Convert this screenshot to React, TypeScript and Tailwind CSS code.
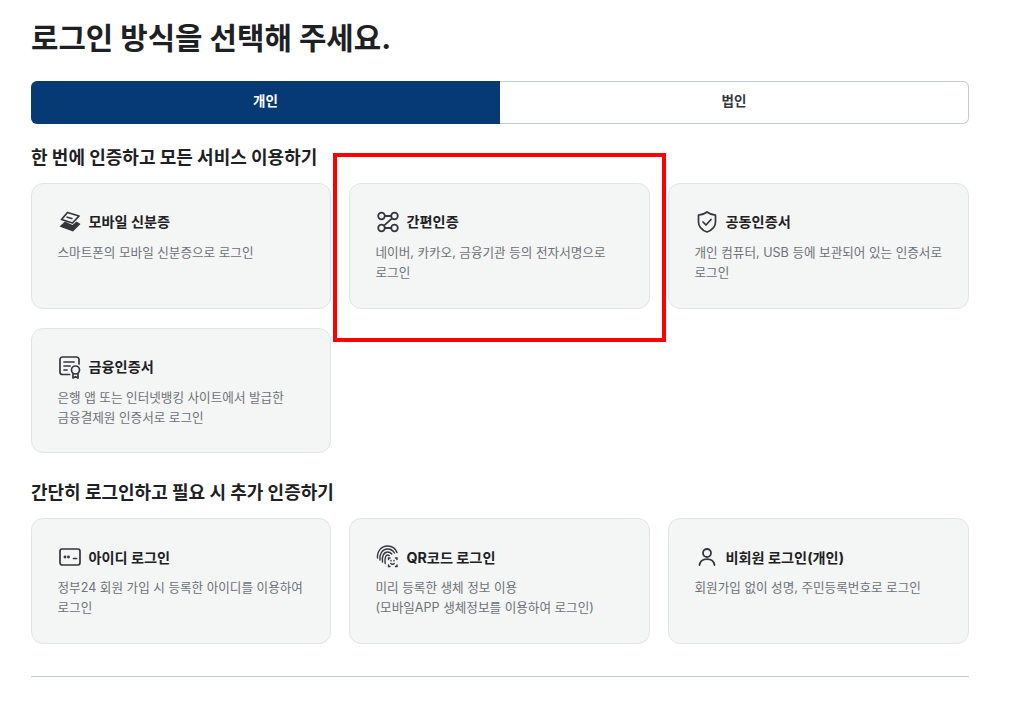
const iconClass = "h-6 w-6 shrink-0 text-[#33363d]";

function MobileIcon() {
  return (
    <svg viewBox="0 0 24 24" className={iconClass} fill="none">
      <path d="M1.500 16.500 7 11.500l7.500 3.500 4-3.500 4 2.500L15 21.500z" fill="currentColor" />
      <path d="M9.500 2.500 21 6l-6.500 7L3.500 9.500z" fill="#f4f5f5" stroke="currentColor" strokeWidth="1.800" strokeLinejoin="round" />
      <path d="m8.500 7 6 1.800" stroke="currentColor" strokeWidth="1.500" />
    </svg>
  );
}

function SimpleAuthIcon() {
  return (
    <svg viewBox="0 0 24 24" className={iconClass} fill="none" stroke="currentColor" strokeWidth="1.800">
      <circle cx="5.500" cy="6" r="3.300" />
      <circle cx="18.500" cy="6" r="3.300" />
      <circle cx="5.500" cy="18" r="3.300" />
      <circle cx="18.500" cy="18" r="3.300" />
      <path d="M8.800 6h6.400M8.800 18h6.400M16 8.300 8 15.700" />
    </svg>
  );
}

function ShieldIcon() {
  return (
    <svg viewBox="0 0 24 24" className={iconClass} fill="none" stroke="currentColor" strokeWidth="1.700" strokeLinejoin="round" strokeLinecap="round">
      <path d="M12 2c2.400 1.900 5 2.900 8.500 3.200V12c0 4.600-3.200 8-8.500 10-5.300-2-8.500-5.400-8.500-10V5.200C7 4.900 9.600 3.900 12 2z" />
      <path d="m8 12 3 3 5-5.500" />
    </svg>
  );
}

function CertIcon() {
  return (
    <svg viewBox="0 0 24 24" className={iconClass} fill="none" stroke="currentColor" strokeWidth="1.700" strokeLinecap="round" strokeLinejoin="round">
      <path d="M11.500 19.500H4.500A2.500 2.500 0 0 1 2 17V4.500A2.500 2.500 0 0 1 4.500 2h14A2.500 2.500 0 0 1 21 4.500V9" />
      <path d="M6 7h10M6 11h6M6 15h3" />
      <circle cx="17.500" cy="15" r="4" />
      <path d="M15 19v4l2.500-1.300L20 23v-4" />
    </svg>
  );
}

function IdIcon() {
  return (
    <svg viewBox="0 0 24 24" className={iconClass} fill="none" stroke="currentColor" strokeWidth="1.700" strokeLinecap="round">
      <rect x="2" y="4" width="20" height="16" rx="2.200" />
      <circle cx="7" cy="12" r="0.600" fill="currentColor" />
      <circle cx="10.500" cy="12" r="0.600" fill="currentColor" />
      <path d="M15.500 13.500h3" />
    </svg>
  );
}

function BioIcon() {
  return (
    <svg viewBox="0 0 24 24" className={iconClass} fill="none" stroke="currentColor" strokeWidth="1.400" strokeLinecap="round">
      <path d="M1.500 13C1 6 5.500 1 11.500 1c4.500 0 8 2.500 9.500 6.500" />
      <path d="M4 15c-1-5.500 2.500-11 7.500-11 3 0 5.500 1.500 7 4" />
      <path d="M6.500 17C5.500 11.500 8 7 11.500 7c1.800 0 3.300.8 4.300 2" />
      <path d="M9.200 18.500C8.500 14 9.500 10 11.500 10c.6 0 1.200.2 1.700.6" />
      <path d="M12.500 14.500v-1.500h1.500M19.500 13h1.500v1.500M21 20v1.500h-1.500M14 21.500h-1.500V20" />
      <path d="M14.800 18.500c.9 1 2.500 1 3.400 0" />
      <path d="M15 15.500v.4M18 15.500v.4" />
    </svg>
  );
}

function UserIcon() {
  return (
    <svg viewBox="0 0 24 24" className={iconClass} fill="none" stroke="currentColor" strokeWidth="1.800" strokeLinecap="round">
      <circle cx="12" cy="8" r="4" />
      <path d="M4.500 20c.6-3.800 3.600-5.800 7.500-5.800s6.900 2 7.500 5.800" />
    </svg>
  );
}

type CardProps = {
  icon: React.ReactNode;
  title: string;
  lines: string[];
};

function Card({ icon, title, lines }: CardProps) {
  return (
    <div className="h-[125.600px] rounded-xl border border-[#e1e4e7] bg-[#f4f5f5] pl-[25.500px] pr-4 pt-[26px]">
      <div className="flex h-6 items-center gap-[7px]">
        {icon}
        <span className="text-[14.200px] font-bold text-[#1e2124]">{title}</span>
      </div>
      <div className="mt-[9px] text-[12.600px] leading-[20px] text-[#6d7278]">
        {lines.map((line) => (
          <p key={line}>{line}</p>
        ))}
      </div>
    </div>
  );
}

export default function App() {
  return (
    <div className="relative h-[711px] w-[1024px] overflow-hidden bg-white font-['Inter','Noto_Sans_CJK_KR',sans-serif]">
      <div className="ml-[31px] w-[938px] pt-[17px]">
        <h1 className="text-[29.800px] leading-[42px] font-bold text-[#1e2124]">로그인 방식을 선택해 주세요.</h1>

        <div className="mt-[22px] flex h-[43px]">
          <div className="flex w-[469px] items-center justify-center rounded-l-md bg-[#053a75] pb-0.5 text-[13.500px] font-bold text-white">
            개인
          </div>
          <div className="flex flex-1 items-center justify-center rounded-r-md border border-l-0 border-[#c6cbd0] pb-0.5 text-[13.500px] font-bold text-[#33363d]">
            법인
          </div>
        </div>

        <h2 className="mt-[21px] text-[18px] leading-[26px] font-bold text-[#1e2124]">한 번에 인증하고 모든 서비스 이용하기</h2>

        <div className="mt-3 grid grid-cols-[300px_301px_301px] gap-x-[18px] gap-y-[19px]">
          <Card icon={<MobileIcon />} title="모바일 신분증" lines={["스마트폰의 모바일 신분증으로 로그인"]} />
          <Card icon={<SimpleAuthIcon />} title="간편인증" lines={["네이버, 카카오, 금융기관 등의 전자서명으로", "로그인"]} />
          <Card icon={<ShieldIcon />} title="공동인증서" lines={["개인 컴퓨터, USB 등에 보관되어 있는 인증서로", "로그인"]} />
          <Card icon={<CertIcon />} title="금융인증서" lines={["은행 앱 또는 인터넷뱅킹 사이트에서 발급한", "금융결제원 인증서로 로그인"]} />
        </div>

        <h2 className="mt-[27px] text-[18px] leading-[26px] font-bold text-[#1e2124]">간단히 로그인하고 필요 시 추가 인증하기</h2>

        <div className="mt-3 grid grid-cols-[300px_301px_301px] gap-x-[18px] gap-y-[19px]">
          <Card icon={<IdIcon />} title="아이디 로그인" lines={["정부24 회원 가입 시 등록한 아이디를 이용하여", "로그인"]} />
          <Card icon={<BioIcon />} title="QR코드 로그인" lines={["미리 등록한 생체 정보 이용", "(모바일APP 생체정보를 이용하여 로그인)"]} />
          <Card icon={<UserIcon />} title="비회원 로그인(개인)" lines={["회원가입 없이 성명, 주민등록번호로 로그인"]} />
        </div>

        <hr className="mt-8 border-t border-[#c6cbd0]" />
      </div>

      {/* red highlight drawn over the screenshot */}
      <div className="absolute top-[153px] left-[333px] h-[189px] w-[333px] border-4 border-[#ff0000]" />
    </div>
  );
}
